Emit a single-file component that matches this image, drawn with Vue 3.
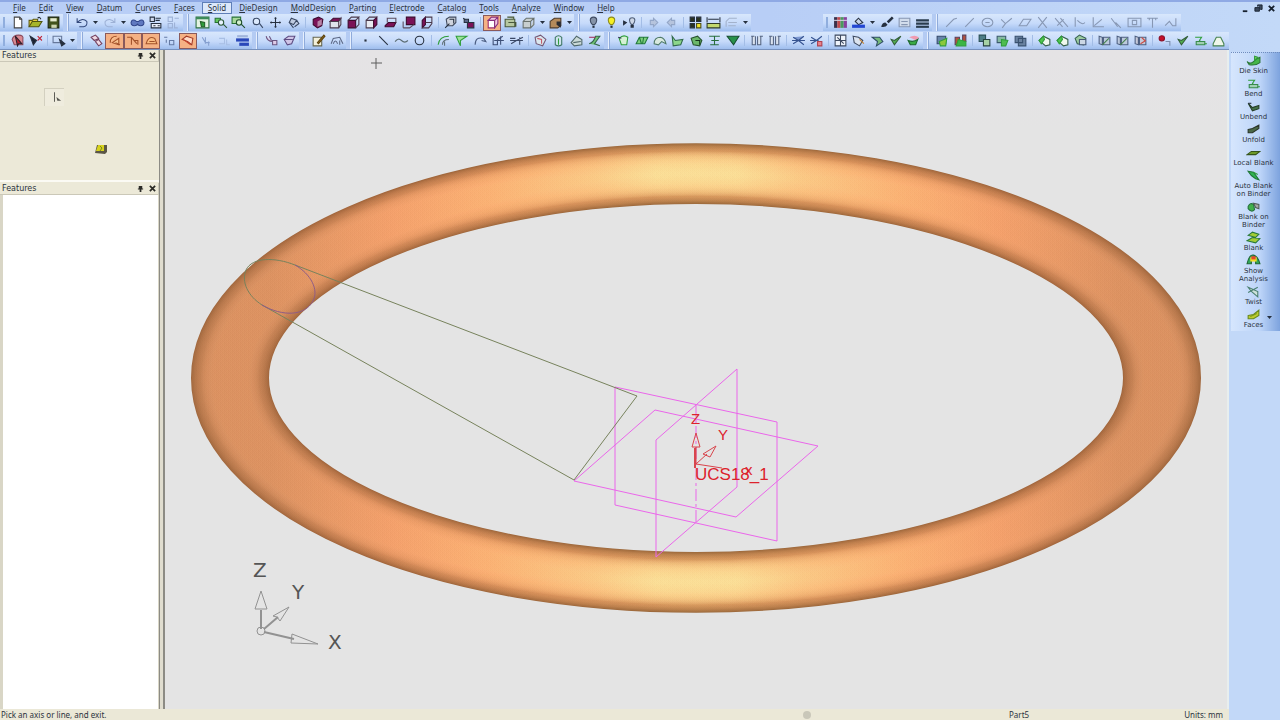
<script setup>
const menus = ['File', 'Edit', 'View', 'Datum', 'Curves', 'Faces', 'Solid', 'DieDesign', 'MoldDesign', 'Parting', 'Electrode', 'Catalog', 'Tools', 'Analyze', 'Window', 'Help']

const P = '#7a1257'
const K = '#26303f'
const N = '#33497c'
const G = '#2f9e3a'
const L = '#63c95a'
const S = '#8797b3'
const O = '#a2512a'
const n = 'none'

/* Every icon is a list of [path, fill, stroke] on a 14 x 12 grid. */
const icons = {
  new: [['M4 1h5l2 2v8H4z', '#fff', '#444'], ['M9 1v2h2', n, '#444']],
  open: [['M1 10V4h3l1-1h4v2', '#e8cf3c', '#5c5a12'], ['M1 10l3-5h9l-3 5z', '#a6b52a', '#4f5410'], ['M9 2q2-2 3 1', n, K]],
  save: [['M2 1h10v10H2z', '#42531b', '#1c2410'], ['M4 2h6v3H4z', '#e6ebd0', n], ['M5 8h5v3H5z', '#cdd5b0', n]],
  undo: [['M2 2v4h4M2 6q5-5 9-1q1 4-3 5H4', n, N]],
  redo: [['M12 2v4H8M12 6q-5-5-9-1q-1 4 3 5h4', n, '#9db1d6']],
  binoc: [['M1 6q1-4 5-1h2q4-3 5 1q0 3-3 3t-3-2q0 2-3 2T1 6z', '#6079c0', '#31468a']],
  prop: [['M2 1h4v4H2zM7 2h5M7 4h4', '#cfd8ec', K], ['M3 7h9v4H3z', '#e9eef8', K], ['M5 9h2M9 9h2', n, K]],
  propGrey: [['M2 1h4v4H2zM8 2h4M2 7h4v4H2zM8 6v5h3', n, '#9db1d6']],
  viewSet: [['M1 1h12v10H1z', '#e4f3e2', '#2d7040'], ['M1 1h12v2H1z', '#3a8a59', n], ['M5 5l4 1v4H6z', G, '#235f27']],
  zoomA: [['M2 2h5v4H2z', L, '#277234'], ['M5 6a2.500 2.500 0 1 0 5 0a2.500 2.500 0 1 0-5 0M10 8l3 3', '#e8f3ff', '#2c5a38']],
  zoomB: [['M1 1h8v6H1z', '#a8d99a', '#277234'], ['M5 6a2.500 2.500 0 1 0 5 0a2.500 2.500 0 1 0-5 0M10 8l3 3', '#d4f1d0', '#1f4f29']],
  zoom: [['M3 5a3 3 0 1 0 6 0a3 3 0 1 0-6 0M9 7l3 4', '#dceafd', '#3a4a66']],
  pan: [['M7 1v10M2 6h10M6 2h2M6 10h2M3 5v2M11 5v2', n, K]],
  rotate: [['M5 2l5 2-3 4-4-2zM3 6l4 5M10 4l2 3-4 3', '#bfcbe0', '#37455f']],
  cubeFull: [['M3 3l5-2 4 2-1 6-4 2-4-3z', P, '#3c0a2c'], ['M7 5l4-2v5l-4 2z', '#b683a5', n]],
  cubeTop: [['M2 5l3-3h7l-2 3z', P, '#3c0a2c'], ['M2 5h8v6H2zM10 5l2-3v6l-2 3', '#dfe3ec', '#4b3b4d']],
  cubeFront: [['M2 4h7v7H2z', P, '#3c0a2c'], ['M2 4l3-3h7l-3 3M12 1v7l-3 3', n, '#4b3b4d']],
  cubeSide: [['M2 4h7v7H2z', '#e8eaf1', '#4b3b4d'], ['M9 4l3-3v7l-3 3z', P, '#3c0a2c'], ['M2 4l3-3h7', n, '#4b3b4d']],
  cubeBottom: [['M2 9l3-3h7l-2 4H2z', P, '#3c0a2c'], ['M4 6V2h8v4', n, '#5b4b5d']],
  cubeBack: [['M5 1h8v7H5z', P, '#3c0a2c'], ['M2 11V5M2 11h6l4-3', n, '#5b4b5d']],
  cubeLeft: [['M3 4l3-3v7l-3 3z', P, '#3c0a2c'], ['M6 1h6v6l-3 4H3M6 6h6', n, '#4b3b4d']],
  viewNorm: [['M3 3l3-2h6v5l-3 3H4z', '#cfd4de', '#404a5e'], ['M6 3h4v4M2 11l4-4', n, K]],
  camera: [['M2 2l3 2M6 6h6v5H6z', P, K], ['M3 3h4v3H3z', '#5a6686', K]],
  shadeActive: [['M3 4h6v7H3z', '#fff', '#a03070'], ['M3 4l3-3h6l-3 3zM12 1v6l-3 4V4', '#f1c6e0', '#87307d']],
  wire: [['M2 3h9v7H2zM4 1h6v2M5 6h7v4', '#b6c7a0', '#48583c']],
  cubeGrey: [['M2 5h7v6H2zM2 5l3-3h7l-3 3M12 2v6l-3 3', '#c8cfcf', '#6a726d']],
  material: [['M2 5l4-3h6v7l-3 2H2z', '#b48a5b', '#4d3a28'], ['M8 5h4v6L8 8z', '#2a2c33', n]],
  bulbOff: [['M4 4a3 3 0 1 1 6 0q0 2-2 4H6Q4 6 4 4z', '#8593a8', '#3f4b62'], ['M6 9h2v2H6z', K, n]],
  bulbOn: [['M4 4a3 3 0 1 1 6 0q0 2-2 4H6Q4 6 4 4z', '#f6f024', '#8c8a1b'], ['M6 9h2v2H6z', K, n]],
  bulbSel: [['M7 4a2.500 2.500 0 1 1 5 0q0 2-2 4H9Q7 6 7 4z', '#cdd7e6', '#51607a'], ['M1 4l4 2-4 3zM8 8h3v3H8z', K, n]],
  right: [['M4 4h3V2l4 4-4 4V8H4z', '#b6c4dd', '#93a6c7']],
  left: [['M10 4H7V2L3 6l4 4V8h3z', '#b6c4dd', '#93a6c7']],
  ref: [['M2 1h4v4H2zM2 7h4v4H2zM8 1h4v4H8z', '#2b3320', K], ['M8 7h4v4H8z', '#f0e42c', '#4f4d12']],
  measure: [['M1 1v5M13 1v5M2 3h10', n, K], ['M1 7h12v4H1z', '#c2d86e', '#2f3b28']],
  listGrey: [['M2 10V5l3-3h7M4 6h8M4 9h7', n, '#a3b2cc']],
  bars: [['M1 1h3v10H1z', '#39304a', n], ['M4 1h3v10H4z', '#c04a4c', n], ['M7 1h3v10H7z', '#4a9a5c', n], ['M10 1h3v10h-3z', '#8a3f9c', n], ['M1 4h12', n, '#d5d0e0']],
  fill: [['M4 5l3-3 4 4-4 2z', '#c9d5ea', K], ['M1 8h12v3H1z', '#2246d2', n]],
  brush: [['M8 5l4-4 1 1-4 4z', K, K], ['M2 10q1-4 4-4l2 2q-2 3-6 2z', '#26303f', n]],
  lineGrey: [['M2 2h10v8H2zM4 5h6M4 8h6', '#d2ddec', '#8696b2']],
  lineWidth: [['M1 3h12v2H1zM1 6h12v2H1z', '#2a3c4d', n], ['M1 9h12v2H1z', '#2a3c4d', n]],
  skLine: [['M2 10l7-7 3-1', n, S]], skSeg: [['M3 10l8-8', n, S]],
  skCirc: [['M2 6a5 4 0 1 0 10 0a5 4 0 1 0-10 0M5 6h4', n, S]],
  skTrim: [['M2 3l4 4 6-5M6 7l-3 4', n, S]],
  skPara: [['M2 9l4-6h7l-4 6z', n, S]],
  skCross: [['M3 1l8 10M11 1L3 11', n, S]],
  skMulti: [['M1 2l7 8M6 2l7 8M3 9l6-6', n, S]],
  skArc: [['M3 1v9M5 4q5 5 7 2', n, S]],
  skAng: [['M3 1v9h10M4 9l7-6', n, S]],
  skDown: [['M3 2l6 8M7 6l5 5', n, S]],
  skBox: [['M1 2h12v8H1zM5 4h4v4H5z', n, S]],
  skT: [['M2 2h10M7 2v9M4 2v2M10 2v2', n, S]],
  skAdd: [['M2 9l4-4 3 4h3V2', n, S]],
  filter: [['M2 5q1-4 6-4t4 4v5H4z', '#d98991', '#8b4a5c'], ['M5 2l6 7-3 0-1 2z', '#b3202c', '#2b1f2c']],
  noPick: [['M2 2l6 4-3 4z', '#1d2333', K], ['M9 2l4 4M13 2L9 6', n, '#c02334']],
  pickBox: [['M1 2h8v6H1z', n, '#65779a'], ['M7 5l5 4-3 2z', K, K]],
  chain: [['M2 3l4-2 3 3-4 2zM6 7l3-2 3 4-3 2z', '#efd9e4', '#74405e']],
  selA: [['M3 8q0-6 6-6M5 8l6-4v6z', '#f9c391', O], ['M8 8l4 2', n, O]],
  selB: [['M2 3h4l5 6M6 3v7M9 6h3v4', n, O]],
  selC: [['M2 9q2-8 8-5l2 5zM5 7h5', '#fbbc82', O]],
  selD: [['M2 5l4-3 6 2-1 6-4-3z', '#ffd9c6', '#a33c28'], ['M3 5l7 5', n, '#c4412c']],
  pts: [['M2 3h3M7 6h4v4H7zM4 5v3', n, '#657ba5']],
  ghost: [['M3 3l3 5h4M6 3v6M9 7v4', n, '#86a0d0']],
  ghost2: [['M2 4h5v5H2M9 5v5h3', n, '#a9bfe4']],
  layers: [['M2 1h10v2H2z', '#9fb4da', n], ['M1 4h12v3H1z', '#2947b9', n], ['M4 8h9v3H4z', '#2947b9', n]],
  curveP: [['M2 2q1 5 6 5M5 2l2 4M8 6h4v4H8z', '#dfcbe6', '#6b5580']],
  gem: [['M2 5l4-3h6l-3 7-4 1zM2 5h8', '#cfc4e6', '#5d4c82']],
  sketch: [['M2 3h8v8H2z', '#f3efd9', '#65664f'], ['M6 8l6-7 1 1-6 7z', '#b58324', '#5c430f']],
  plane: [['M2 9l2-5 6-1 3 6M4 9q2-5 4 0M10 6v4', n, '#5b6885']],
  dot: [['M6 5h2v2H6z', K, n]],
  line: [['M3 2l8 8', n, K]],
  spline: [['M1 7q3-4 6-1t6 0', n, '#5b6d74']],
  circle: [['M3 6a4 4 0 1 0 8 0a4 4 0 1 0-8 0', n, K]],
  gCurve: [['M2 10q1-8 10-8', n, G], ['M6 10q0-5 6-5M8 7v4', n, '#5e6f77']],
  gCorner: [['M2 2h10L6 6v5z', '#9de29a', G]],
  arrowC: [['M2 10q0-8 8-6M10 4l2 3-4-1', n, '#4b5d82']],
  trim: [['M2 3v7h4V5l5-3M9 2v8M3 6h9', n, '#3d4e75']],
  trim2: [['M1 4h5M2 9l5-3 6-3M10 3v7M1 6h12', n, '#3a4866']],
  face: [['M2 3l5-2 5 4-3 6-6-2z', '#dbe7ee', '#735774'], ['M4 4l4 1v4', n, '#c45867']],
  cyl: [['M4 3q3-3 6 0v7q-3 2-6 0z', '#cfe4ee', '#3f7765'], ['M7 4v6', n, G]],
  sheet: [['M2 8l5-6 5 3v5l-7 1z', '#cbdad8', '#50686a'], ['M4 8l7-1', n, '#50686a']],
  sweep: [['M2 9q4-1 6-7h4L7 9l5 2', '#6fc374', '#36684b'], ['M2 3h6', n, '#a1335f']],
  gExt: [['M3 4q4-4 8-1l-1 7H5z', '#d5f1d4', G], ['M2 3l3 1', n, '#335']],
  gRib: [['M2 9l3-6h8l-3 6zM5 3l2 6M9 3l-1 6', '#7ed07c', '#21793a']],
  gShell: [['M2 9q0-6 6-6 4 1 5 6l-4-2-3 3z', '#d9e9df', '#4f7a68']],
  gHole: [['M2 2l3 4 7-1-2 5-7 1z', '#8cd68b', '#30684a']],
  gBlock: [['M2 4l6-2 4 4-2 5-6-1z', '#6bb76b', '#27542f'], ['M6 6h4v4', n, '#15351c']],
  gDraft: [['M2 2h10M7 2v8M3 10h8M4 6h7', '#4ebd59', '#276d3d']],
  gDown: [['M2 2h11L8 10z', '#28914a', '#174e30']],
  tools: [['M3 2v8h3V2M8 2v8h3V2M2 2h3M10 2h3', '#dbe3ef', '#566582']],
  cut: [['M2 3l5 3 5-4M7 6l5 4M2 9l5-3M1 6h12', '#7f9ad2', '#35528f']],
  cutR: [['M2 3l5 3 5-4M7 6M2 9l5-3M1 6h8', n, '#35528f'], ['M8 7h4v4H8z', '#e8838c', '#b0414e']],
  grid: [['M2 1h10v10H2zM7 1v10M2 6h10M4 3l6 6', '#eef3fa', '#3e4a60']],
  gridO: [['M2 2l5 1 4 3-3 5-5-3z', '#dbe3ef', '#3e4a60'], ['M8 5l4 4', n, '#c78432']],
  gLayer: [['M2 3h7l3 4-6 4 1-4z', '#76b97a', '#2e4d64']],
  gCheck: [['M3 5l3 5 6-8-6 4z', '#52ad4f', '#345e39']],
  gPink: [['M3 3q5-3 9 0l-2 3z', '#f09ab0', n], ['M2 6q5 2 9-1l-2 5H4z', '#39ab46', '#1e6930']],
  core: [['M2 2h8v7H2z', '#6785a9', '#35496b'], ['M4 7l7-3-1 7H5z', '#8bc83b', G]],
  core2: [['M2 3h4v7H2zM9 1h3v6H9z', '#b5503c', '#58405a'], ['M5 5l7 2v4H3z', '#3bb645', G]],
  split: [['M2 1h6v6H2z', '#4d7d85', '#294f55'], ['M6 5h6v6H6z', '#a6d1a4', '#28433f']],
  split2: [['M2 2h8v6H2z', '#86b9a2', '#3b5a6c'], ['M6 5l6 1-2 5H6z', '#4ebc51', G]],
  split3: [['M2 2h7v6H2zM5 4h7v7H5z', '#6a82a0', '#38506e']],
  leaf: [['M2 6l4-4 6 3v5l-4 1z', '#f0f8ee', '#355f49'], ['M2 6l4-4 1 3-3 4z', '#50c44e', G]],
  stack: [['M2 4l4-3 6 3-2 6-6-1z', '#9bcba0', '#35604f'], ['M6 5h6v5H6z', '#cbd7e4', '#445776']],
  blocks: [['M2 2l3 1v7l-3-1zM6 3h6v7H6z', '#bcc9dc', '#4d5f80'], ['M5 10l6-6', n, '#45804d']],
  blocksR: [['M2 2l3 1v7l-3-1zM6 3h6v7H6z', '#c7cad9', '#4d5f80'], ['M8 3l3 3M7 9l5-3', n, '#cc4940']],
  red: [['M2 4a2.500 2.500 0 1 1 5 0a2.500 2.500 0 1 1-5 0', '#c5102b', '#8c1128'], ['M8 7h4v4', n, '#7b8cab']],
  dieSkin: [['M1 7q3 3 6 0t6-4v5q-4 3-10 2z', '#46b749', '#2c7638'], ['M8 2l3 1-3 3z', '#7fd06d', G]],
  bend: [['M2 3h6l-2 3 3 3h4', n, G], ['M3 7h8v3H3z', '#9fcfb2', '#388a4b']],
  unbend: [['M2 3l4 4 6-2v3l-6 2z', '#44724a', '#263f29'], ['M2 3h3', n, K]],
  unfold: [['M2 6l4-1 6-3v3L6 9H2z', '#4a6848', '#2b352a']],
  local: [['M1 8l4-3h8L9 8z', '#6c9a2a', '#36551d']],
  auto: [['M2 2l5 1 5 7-3-1-4-3z', '#2fb450', '#217538'], ['M7 3l4 2', n, G]],
  blankOn: [['M2 6q2-4 5-2l1 5q-3 3-6-1z', '#41b04c', '#23723a'], ['M7 3l5 1v4l-3-1z', '#a7aaa5', '#515b57']],
  blank: [['M2 4l4-3 6 2-3 3zM1 9l5-3 7 1-4 4z', '#a3cc34', '#28783b']],
  show: [['M1 9q2-9 6-8t6 8H9V6H5v3z', '#31a95a', '#206634'], ['M4 3h6v4H4z', '#f0dc28', n], ['M5 2h4v3H5z', '#e3482b', n]],
  twist: [['M2 2l9 4v5L5 6zM11 2L2 7', '#cde1da', '#4a8070']],
  faces: [['M2 7l5-1 5-4v5l-5 3H2z', '#bccc2c', '#67891f'], ['M4 8l6-3', n, '#749520']],
  gHat: [['M2 9l3-6h4l3 6v2H2z', '#eff6ea', '#488450']],
}

/* '|' starts a titled group with a grip, '/' is a thin divider, 'v' opens a list, '*' marks a pressed tool. */
const parse = (text) => {
  const parts = []
  for (const word of text.trim().split(/\s+/)) {
    if (word === '|' || word === '/') parts.push({ type: word === '|' ? 'grip' : 'sep', items: [] })
    else parts[parts.length - 1].items.push({ arrow: word === 'v', on: word.endsWith('*'), name: word.replace('*', '') })
  }
  for (const p of parts) {
    p.width = Math.round(p.items.reduce((sum, i) => sum + (i.arrow ? 9 : 55 / 3), 0))
  }
  return parts
}

const rows = [
  [
    parse('| new open save | undo v redo v binoc prop propGrey | viewSet zoomA zoomB zoom pan rotate / cubeFull cubeTop cubeFront cubeSide cubeBottom cubeBack cubeLeft / viewNorm camera / shadeActive* wire cubeGrey v material v | bulbOff bulbOn bulbSel / right left / ref measure listGrey v'),
    parse('| bars fill v brush lineGrey lineWidth | skLine skSeg skCirc skTrim skPara skCross skMulti skArc skAng skDown skBox skT skAdd'),
  ],
  [
    parse('| filter noPick / pickBox v | chain selA* selB* selC* pts selD* ghost ghost2 layers | curveP gem | sketch plane | dot line spline circle / gCurve gCorner arrowC trim trim2 / face cyl sheet sweep | gExt gRib gShell gHole gBlock gDraft gDown / tools tools / cut cutR / grid gridO gLayer gCheck gPink | core core2 / split split2 split3 / leaf leaf stack / blocks blocks blocksR / red gCheck bend gHat'),
  ],
]

const palette = [
  { icon: 'dieSkin', lines: ['Die Skin'] },
  { icon: 'bend', lines: ['Bend'] },
  { icon: 'unbend', lines: ['Unbend'] },
  { icon: 'unfold', lines: ['Unfold'] },
  { icon: 'local', lines: ['Local Blank'] },
  { icon: 'auto', lines: ['Auto Blank', 'on Binder'] },
  { icon: 'blankOn', lines: ['Blank on', 'Binder'] },
  { icon: 'blank', lines: ['Blank'] },
  { icon: 'show', lines: ['Show', 'Analysis'] },
  { icon: 'twist', lines: ['Twist'] },
  { icon: 'faces', lines: ['Faces'], more: true },
]

/* Nested rings, each a little narrower, build the round shading of the tube. */
const bodyRings = Array.from({ length: 18 }, (_, i) => ({ width: 76 - i * 3, opacity: 0.14 }))
const glowRings = Array.from({ length: 18 }, (_, i) => ({ width: 57 - i * 3, opacity: 0.12 }))
</script>

<template>
  <div class="app">
    <header class="top">
      <nav class="menubar">
        <button v-for="m in menus" :key="m" type="button" :class="{ picked: m === 'Solid' }"><u>{{ m[0] }}</u>{{ m.slice(1) }}</button>
        <span class="win">
          <button type="button" aria-label="Minimize"><svg viewBox="0 0 10 10"><path d="M2 8h5" stroke="#16202e" stroke-width="2" /></svg></button>
          <button type="button" aria-label="Restore"><svg viewBox="0 0 10 10"><path d="M4 1h5v5H7M4 1v2M1 4h5v4H1z" fill="#3c495c" stroke="#16202e" /></svg></button>
          <button type="button" aria-label="Close"><svg viewBox="0 0 10 10"><path d="M2 2l6 6M8 2L2 8" stroke="#16202e" stroke-width="2" /></svg></button>
        </span>
      </nav>
      <div v-for="(row, r) in rows" :key="r" class="row">
        <div v-for="(bar, b) in row" :key="b" class="bar" role="toolbar">
          <template v-for="(g, k) in bar" :key="k">
            <i :class="g.type"></i>
            <div class="group" :style="{ width: g.width + 'px' }">
              <button v-for="(it, j) in g.items" :key="j" type="button" :class="{ arrow: it.arrow, on: it.on }" :aria-label="it.arrow ? 'More' : it.name">
                <svg v-if="it.arrow" class="tri" viewBox="0 0 5 3"><path d="M0 0h5L2.500 3z" fill="#26303f" /></svg>
                <svg v-else viewBox="0 0 14 12"><path v-for="(s, q) in icons[it.name]" :key="q" :d="s[0]" :fill="s[1]" :stroke="s[2]" /></svg>
              </button>
            </div>
          </template>
        </div>
      </div>
    </header>

    <main class="work">
      <div class="left">
        <aside class="side">
          <section v-for="p in 2" :key="p" class="panel" :class="p === 1 ? 'options' : 'tree'">
            <h2>
              <span>Features</span>
              <button type="button" aria-label="Pin"><svg viewBox="0 0 8 8"><path d="M2 1h4v3H2zM1 4h6v1H1zM3 5h2v3H3z" fill="#2c2c28" /></svg></button>
              <button type="button" aria-label="Close"><svg viewBox="0 0 8 8"><path d="M1 1l6 6M7 1L1 7" stroke="#2c2c28" stroke-width="2" /></svg></button>
            </h2>
            <div class="body">
              <template v-if="p === 1">
                <button type="button" class="axis" aria-label="Axis"><svg viewBox="0 0 20 17"><path d="M10 3v10" stroke="#55554f" /><path d="M12 8l5 4h-4z" fill="#55554f" /></svg></button>
                <button type="button" class="ok" aria-label="Apply"><svg viewBox="0 0 14 12"><path d="M1 10l2-8h10v7l-2 2z" fill="#5b5646" /><path d="M2 8l2-6h6v6z" fill="#d6d21c" /><path d="M6 3l2 2-2 3" fill="none" stroke="#7c8420" /></svg></button>
              </template>
            </div>
          </section>
        </aside>
        <div class="splitter"></div>
        <svg class="scene" viewBox="0 0 1062 659" preserveAspectRatio="xMidYMid meet">
          <defs>
            <linearGradient id="rim" gradientUnits="userSpaceOnUse" x1="26" x2="1036" y1="0" y2="0">
              <stop offset="0" stop-color="#a2693f" />
              <stop offset="0.150" stop-color="#a3663c" />
              <stop offset="0.500" stop-color="#9c6a3c" />
              <stop offset="0.850" stop-color="#a3663c" />
              <stop offset="1" stop-color="#a2693f" />
            </linearGradient>
            <linearGradient id="tube" gradientUnits="userSpaceOnUse" x1="26" x2="1036" y1="0" y2="0">
              <stop offset="0" stop-color="#da9262" />
              <stop offset="0.080" stop-color="#dc9363" />
              <stop offset="0.200" stop-color="#f09d68" />
              <stop offset="0.350" stop-color="#f9a96c" />
              <stop offset="0.500" stop-color="#fbb572" />
              <stop offset="0.650" stop-color="#f9a96c" />
              <stop offset="0.800" stop-color="#f09d68" />
              <stop offset="0.920" stop-color="#dc9363" />
              <stop offset="1" stop-color="#da9262" />
            </linearGradient>
            <linearGradient id="glow" gradientUnits="userSpaceOnUse" x1="26" x2="1036" y1="0" y2="0">
              <stop offset="0" stop-color="#de9565" />
              <stop offset="0.080" stop-color="#e09665" />
              <stop offset="0.200" stop-color="#f7a46f" />
              <stop offset="0.300" stop-color="#ffb678" />
              <stop offset="0.400" stop-color="#ffcd89" />
              <stop offset="0.460" stop-color="#ffe29a" />
              <stop offset="0.540" stop-color="#ffe29a" />
              <stop offset="0.600" stop-color="#ffcd89" />
              <stop offset="0.700" stop-color="#ffb678" />
              <stop offset="0.800" stop-color="#f7a46f" />
              <stop offset="0.920" stop-color="#e09665" />
              <stop offset="1" stop-color="#de9565" />
            </linearGradient>
          </defs>
          <g transform="translate(0 328) scale(1 0.780)" fill="none">
            <ellipse cx="531" cy="0" rx="466" ry="262" stroke="url(#rim)" stroke-width="78" />
            <ellipse v-for="(g, i) in bodyRings" :key="'b' + i" cx="531" cy="0" rx="466" ry="262" stroke="url(#tube)" :stroke-width="g.width" :stroke-opacity="g.opacity" />
            <ellipse v-for="(g, i) in glowRings" :key="'g' + i" cx="531" cy="0" rx="466" ry="262" stroke="url(#glow)" :stroke-width="g.width" :stroke-opacity="g.opacity" />
          </g>
          <path d="M211 8v11M206 13h11" class="cursor" />
          <g class="planes">
            <path d="M450 337l162 35v119l-162-36z" />
            <path d="M490 360l163 36-82 71-162-36z" />
            <path d="M572 319v118l-81 70V390z" />
            <path d="M531 355v118" stroke-dasharray="12 3 3 3" />
          </g>
          <g class="profile">
            <path d="M97 255C83 246 76 232 81 220C87 207 110 207 130 215L472 346L409 430Z" />
            <path class="hidden" d="M130 215C146 224 154 240 148 251C140 266 118 267 97 255" />
          </g>
          <g class="ucs">
            <path d="M531 414V397M527 397l4-14 4 14zM531 414l11-10M538 404l13-8-6 11zM531 414l26 4" />
            <path d="M530 398v20" stroke-width="2" />
            <text x="526" y="374">Z</text>
            <text x="553" y="390">Y</text>
            <text x="580" y="425">x</text>
            <text class="label" x="530" y="430">UCS18_1</text>
          </g>
          <g class="triad">
            <path d="M96 579v-19M99 579l14-12M99 582l30 7" stroke-width="2" />
            <path d="M90 559l6-18 6 18zM108 566l16-9-9 14-3-4zM127 584l26 10-27-1z" />
            <circle cx="96" cy="581" r="4" />
            <text x="88" y="527">Z</text>
            <text x="127" y="549">Y</text>
            <text x="163" y="599">X</text>
          </g>
        </svg>
      </div>
      <footer class="status">
        <span class="hint">Pick an axis or line, and exit.</span>
        <i class="lamp"></i>
        <span class="part">Part5</span>
        <span class="units">Units: mm</span>
      </footer>
    </main>

    <aside class="dock">
      <div class="palette">
        <button v-for="t in palette" :key="t.icon" type="button">
          <svg viewBox="0 0 14 12"><path v-for="(s, q) in icons[t.icon]" :key="q" :d="s[0]" :fill="s[1]" :stroke="s[2]" /></svg>
          <span v-for="l in t.lines" :key="l">{{ l }}</span>
          <svg v-if="t.more" class="tri" viewBox="0 0 5 3"><path d="M0 0h5L2.500 3z" fill="#26303f" /></svg>
        </button>
      </div>
    </aside>
  </div>
</template>

<style>
html, body { height: 100%; overflow: hidden; }
#app { height: 100%; }
</style>

<style scoped>
.app {
  height: 100vh;
  display: grid;
  grid-template-columns: 1fr 51px;
  grid-template-rows: auto 1fr;
  background: #c2d8f8;
  color: #2b3340;
  font: 8px/10px "DejaVu Sans", "Noto Sans", sans-serif;
  overflow: hidden;
}
button {
  border: 0;
  padding: 0;
  margin: 0;
  background: none;
  color: inherit;
  font: inherit;
}
svg { display: block; }
.top {
  grid-column: 1 / 3;
  border-top: 2px solid #8fa9e4;
  background: linear-gradient(90deg, #b8cef6, #b8cef6 60%, #c3d9f8);
}
.menubar {
  display: flex;
  gap: 1px;
  height: 12px;
  padding-left: 7px;
  font: 8px/10px "Noto Sans", sans-serif;
}
.menubar > button { padding: 0 5px; border: 1px solid transparent; white-space: nowrap; }
.menubar .picked { background: #dce8fb; border-color: #5f7fb8; }
.win { display: flex; gap: 4px; margin-left: auto; padding-right: 4px; }
.win svg { width: 9px; height: 9px; }
.row { display: flex; gap: 72px; height: 18px; }
.bar {
  display: flex;
  align-items: center;
  height: 17px;
  padding: 0 1px;
  background: linear-gradient(#d8e7fc, #c6dafa 55%, #9fbeee);
}
.row:last-child .bar { border-bottom: 1px solid #7791bd; }
.grip {
  width: 0;
  height: 11px;
  margin: 0 3px 0 2px;
  border-left: 2px solid #90aede;
}
.grip:not(:first-child) {
  margin: 0 3px 0 0;
  height: 17px;
  width: 3px;
  border-left: 4px solid #b4cbf3;
  background: linear-gradient(90deg, #e6effd 1px, #8fabdb 1px, #8fabdb 2px, transparent 2px);
}
.sep { width: 1px; height: 11px; margin: 0 2px; background: #a3bde6; }
.group { display: flex; height: 16px; }
.group button { flex: 18 1 0; display: grid; place-items: center; min-width: 0; }
.group .arrow { flex: 9 1 0; }
.group .on { background: #f5b184; box-shadow: inset 0 0 0 1px #8a5a5c; }
.group svg { width: 15px; height: 13px; }
svg.tri, .group svg.tri { width: 5px; height: 3px; }

.work { display: flex; flex-direction: column; min-height: 0; min-width: 0; }
.left { flex: 1; display: flex; min-height: 0; background: #e4e4e4; border-right: 2px solid #e8eeee; }
.side {
  width: 159px;
  display: flex;
  flex-direction: column;
  background: #ece9d8;
}
.panel { display: flex; flex-direction: column; }
.options { height: 133px; }
.options .body { flex: 1; position: relative; border-bottom: 2px solid #fbfaf4; margin-bottom: 1px; }
.tree { flex: 1; }
.tree .body { flex: 1; background: #fff; border: 1px solid #d9d6c6; border-width: 0 1px 0 3px; }
h2 {
  display: flex;
  align-items: center;
  height: 11px;
  margin: 0;
  padding: 0 2px;
  gap: 5px;
  font: inherit;
  border: 1px solid #cbc8b8;
  border-width: 0 1px 1px 0;
}
h2 span { margin-right: auto; }
h2 svg { width: 7px; height: 7px; }
.axis { position: absolute; left: 44px; top: 26px; border: 1px solid #d3d0c0; border-width: 1px 0 0 1px; background: #efecde; }
.axis svg { width: 19px; height: 17px; }
.ok { position: absolute; left: 94px; top: 81px; }
.ok svg { width: 14px; height: 12px; }
.splitter { width: 6px; box-sizing: border-box; background: #e0ddcf; border: 1px solid #8c8b84; border-width: 0 2px 0 1px; }
.scene { flex: 1; min-width: 0; height: 100%; background: linear-gradient(#e5e3e5, #e4e4e4 12%); }
.cursor { stroke: #5c5c5c; fill: none; }
.planes { fill: none; stroke: #ea66ea; stroke-width: 1; }
.profile { fill: none; stroke: #77825c; stroke-width: 1; }
.profile .hidden { stroke: #8f5c86; }
.ucs { fill: none; stroke: #d8454c; }
.ucs text { font: 15px/16px "Liberation Sans", sans-serif; fill: #dd222c; stroke: none; }
.ucs .label { font-size: 17px; }
.triad { fill: none; stroke: #929292; }
.triad text { font: 20px/24px "DejaVu Sans", sans-serif; fill: #555; stroke: none; }

.status {
  display: grid;
  grid-template-columns: 803px 206px 1fr auto;
  align-items: center;
  height: 11px;
  padding-right: 6px;
  background: #ebe8d7;
  font: 8px/10px "Noto Sans", sans-serif;
}
.hint { padding-left: 1px; }
.lamp { width: 8px; height: 8px; border-radius: 50%; background: #c9c7b9; }

.dock { padding: 2px 0 0 2px; }
.palette {
  display: flex;
  flex-direction: column;
  border-top: 1px dotted #6f8cbd;
  padding: 1px 4px 2px 0;
  gap: 2px;
  background: linear-gradient(90deg, #d6e6fd, #bcd4f8 60%, #7da3de);
  font: 7px/8px "DejaVu Sans", sans-serif;
}
.palette button { position: relative; display: flex; flex-direction: column; align-items: center; white-space: nowrap; }
.palette button svg { width: 15px; height: 13px; }
.palette button svg.tri { position: absolute; right: 4px; top: 8px; width: 5px; height: 3px; }
</style>
